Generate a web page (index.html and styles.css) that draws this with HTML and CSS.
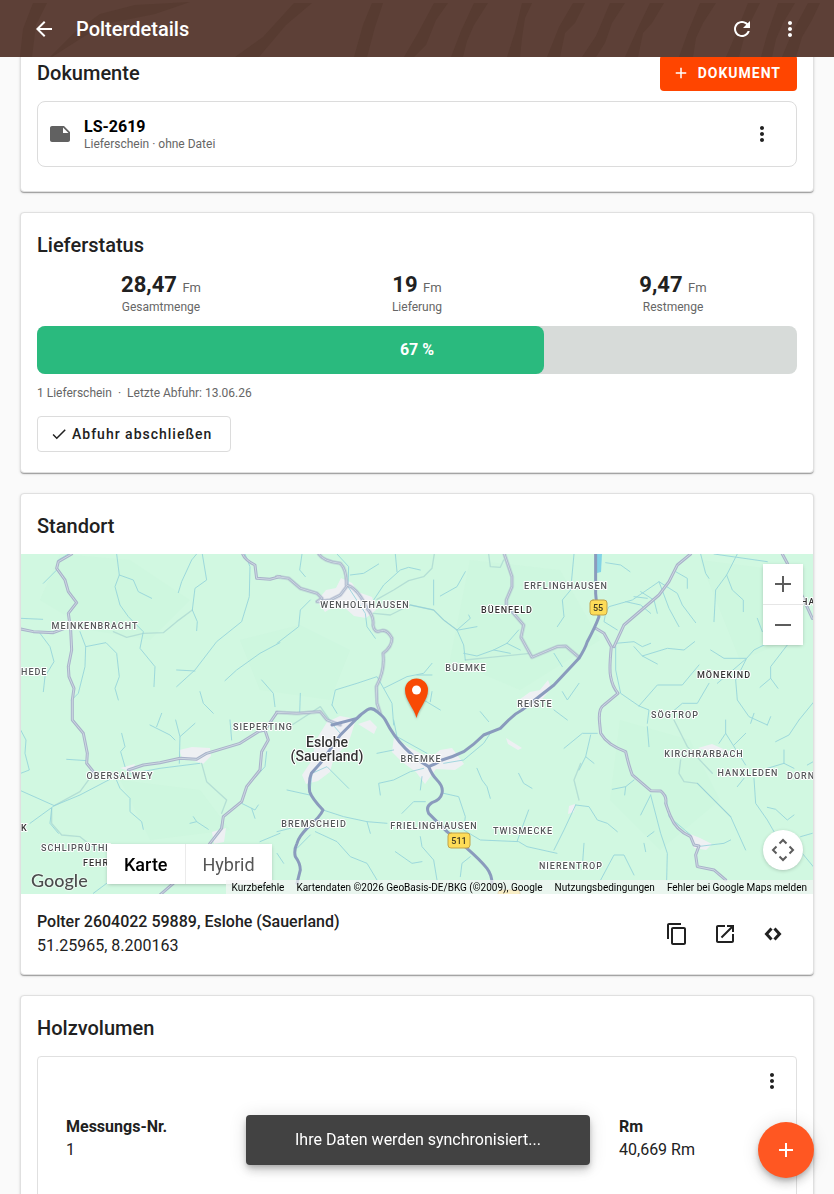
FILE: index.html
```html
<!DOCTYPE html>
<html lang="de">
<head>
    <meta charset="UTF-8">
    <meta name="viewport" content="width=device-width, initial-scale=1">
    <title>Polterdetails</title>
    <link rel="stylesheet" href="styles.css">
</head>
<body>
    <header class="topbar">
        <svg class="topbar-pattern" viewBox="0 0 834 57" preserveAspectRatio="xMidYMid slice" aria-hidden="true">
            <path d="M33 3h14L36 25 32 57H20l3-28zM75 32l25-18 35-9 55-3-35 12-50 10-25 15-28 18H50zM294 3h18l-26 22-27 32h-24l28-20zM372 3h11l-8 24-8 30h-13l9-32zM434 3h14l-12 17-10 25-12 12h-10l14-24zM474 3h14l-14 22-7 16-4 16h-12l10-26zM522 3h10l-7 15-3 20-2 19h-13l8-25zM573 3h12l-10 20-10 10-5 24h-13l12-30zM610 3h15l-13 20-7 20-9 14h-14l14-21zM650 3h14l-12 20-9 10-5 24h-13l13-29zM700 3h16l-13 20-7 15-3 19h-14l9-25zM748 3h12l-9 18-7 17-5 19h-13l9-21zM778 3h17l-12 20-7 16-4 18h-11l6-22zM808 3h12l-8 17-10 17-6 20h-14l10-24z"/>
        </svg>
        <button class="icon-button" aria-label="Zurück">
            <svg viewBox="0 0 24 24"><path d="M20 11H7.83l5.59-5.59L12 4l-8 8 8 8 1.41-1.41L7.83 13H20v-2z"/></svg>
        </button>
        <h1>Polterdetails</h1>
        <button class="icon-button" aria-label="Aktualisieren">
            <svg viewBox="0 0 24 24"><path d="M17.65 6.35C16.2 4.9 14.21 4 12 4c-4.42 0-7.99 3.58-7.99 8s3.57 8 7.99 8c3.73 0 6.84-2.55 7.73-6h-2.08c-.82 2.33-3.04 4-5.65 4-3.31 0-6-2.69-6-6s2.69-6 6-6c1.66 0 3.14.69 4.22 1.78L13 11h7V4l-2.35 2.35z"/></svg>
        </button>
        <button class="icon-button" aria-label="Menü">
            <svg viewBox="0 0 24 24"><path d="M12 8c1.1 0 2-.9 2-2s-.9-2-2-2-2 .9-2 2 .9 2 2 2zm0 2c-1.1 0-2 .9-2 2s.9 2 2 2 2-.9 2-2-.9-2-2-2zm0 6c-1.1 0-2 .9-2 2s.9 2 2 2 2-.9 2-2-.9-2-2-2z"/></svg>
        </button>
    </header>

    <main class="content">
        <section class="card documents">
            <div class="card-header">
                <h2>Dokumente</h2>
                <button class="button button-primary">
                    <svg viewBox="0 0 24 24"><path d="M19 13h-6v6h-2v-6H5v-2h6V5h2v6h6v2z"/></svg>
                    DOKUMENT
                </button>
            </div>
            <div class="document">
                <svg class="document-icon" viewBox="0 0 24 24"><path d="M22 10l-6-6H4c-1.1 0-2 .9-2 2v12.01c0 1.1.9 1.99 2 1.99l16-.01c1.1 0 2-.89 2-1.99v-8zm-7-4.5l5.5 5.5H15V5.5z"/></svg>
                <div class="document-text">
                    <strong>LS-2619</strong>
                    <span>Lieferschein · ohne Datei</span>
                </div>
                <button class="icon-button" aria-label="Dokument-Menü">
                    <svg viewBox="0 0 24 24"><path d="M12 8c1.1 0 2-.9 2-2s-.9-2-2-2-2 .9-2 2 .9 2 2 2zm0 2c-1.1 0-2 .9-2 2s.9 2 2 2 2-.9 2-2-.9-2-2-2zm0 6c-1.1 0-2 .9-2 2s.9 2 2 2 2-.9 2-2-.9-2-2-2z"/></svg>
                </button>
            </div>
        </section>

        <section class="card status">
            <h2>Lieferstatus</h2>
            <div class="stats">
                <div class="stat">
                    <div class="stat-value">28,47 <span class="unit">Fm</span></div>
                    <div class="stat-label">Gesamtmenge</div>
                </div>
                <div class="stat">
                    <div class="stat-value">19 <span class="unit">Fm</span></div>
                    <div class="stat-label">Lieferung</div>
                </div>
                <div class="stat">
                    <div class="stat-value">9,47 <span class="unit">Fm</span></div>
                    <div class="stat-label">Restmenge</div>
                </div>
            </div>
            <div class="progress">
                <div class="progress-fill" style="width: 66.7%"></div>
                <span class="progress-label">67 %</span>
            </div>
            <p class="status-meta"><span>1 Lieferschein</span><span class="dot">·</span><span>Letzte Abfuhr: 13.06.26</span></p>
            <button class="button button-outlined">
                <svg viewBox="0 0 24 24"><path d="M9 16.17L4.83 12l-1.42 1.41L9 19 21 7l-1.41-1.41z"/></svg>
                Abfuhr abschließen
            </button>
        </section>

        <section class="card location">
            <h2>Standort</h2>
            <div class="map">
                <svg class="map-canvas" viewBox="21 554 792 340" preserveAspectRatio="xMidYMid slice" role="img" aria-label="Karte von Eslohe">
                    <defs>
                        <g id="roads-small">
                            <g transform="translate(0 480) scale(.3333)">
                                <path d="M215 222L175 245 170 265 195 300 205 335 230 368 205 400 212 450 215 510 205 560 207 590 222 625 217 660 217 720 250 760 262 820 260 850 280 875"/>
                                <path d="M62 447L100 455 160 458 208 440M728 222Q735 240 765 255L770 295 810 298 840 290"/>
                            </g>
                            <g transform="translate(0 720) scale(.3333)">
                                <path d="M385 150L430 135 480 128 540 115 590 118 620 100 720 70 775 35 795 30 805 60 785 95 780 150 740 200 725 245 670 290 665 325 630 370 610 400 520 490 480 525M795 30L831 -23"/>
                            </g>
                            <g transform="translate(277 550) scale(.3333)">
                                <path d="M0 80L35 85 70 115 120 130 135 145 120 155 160 150 190 135 210 108M125 12Q140 35 190 40 210 60 208 105 240 110 270 175 292 200 288 225 292 250 310 243 330 235 345 265 345 290 318 310 325 360 298 410L300 460 310 490M0 487L60 490 130 485 150 510 190 525M682 12L705 80 705 110 688 150 688 165 740 225 732 262 765 322 840 290 866 288 906 322"/>
                            </g>
                            <g transform="translate(554 550) scale(.3333)">
                                <path d="M410 12L370 45 345 95 315 135 210 225 180 290M125 235L150 250 172 290Q165 360 170 380 175 410 192 430L150 465Q132 475 137 520L140 550Q160 585 215 605 225 650 235 675L290 722 320 723Q340 740 335 760 345 790 350 800 365 840 410 860L420 885 435 888 425 915 430 950 480 960 515 990M685 12L700 40 775 205"/>
                            </g>
                        </g>
                    </defs>
                    <rect class="map-land" x="21" y="554" width="792" height="340"/>
                    <g class="map-relief">
                        <path d="M60 554L130 560 190 600 150 640 90 630 40 600zM240 640L300 625 350 650 330 700 260 690zM470 560L560 570 600 640 520 690 450 660zM620 720L690 740 720 800 660 850 610 800zM120 780L200 790 230 830 150 840zM700 560L780 570 790 640 740 660z"/>
                    </g>
                    <g class="map-town">
                        <path d="M317 601L326 590 336 588 341 578 352 583 358 592 372 597 376 610 366 618 354 616 345 608 333 607 325 612z"/>
                        <path d="M327 722L340 716 356 719 352 732 348 744 334 757 330 772 318 781 306 784 302 775 312 760 316 740z"/>
                        <path d="M358 724L370 720 377 727 374 734zM394 737L408 747 430 758 440 750 452 748 464 764 455 770 436 769 425 784 416 772 402 762 392 752z"/>
                        <path d="M516 702L530 692 540 690 548 680 551 688 540 702 522 710zM179 750L192 747 210 748 211 756 203 764 192 760 183 760zM506 738L522 748 518 750 508 744z"/>
                        <path d="M690 834L700 838 712 844 706 850 694 848zM212 832L226 828 224 842 214 844zM120 768L135 764 132 772zM569 806L575 804 574 812 568 814zM698 748L712 744 730 752 708 752z"/>
                    </g>
                    <g class="map-tracks">
                        <path transform="translate(0 480) scale(.3333)" d="M340 455L380 472 430 460 490 458 530 425 577 390"/>
                        <path transform="translate(277 550) scale(.3333)" d="M472 12L465 55 440 80 395 92 350 120 300 148M290 190L340 195 400 165 470 180 500 210 540 240M565 330L640 322 760 310M635 12L640 50 670 52 680 30M45 525L130 470 165 520"/>
                        <path transform="translate(0 720) scale(.3333)" d="M163 257L240 215 280 160M605 130L620 185 680 240 665 280M155 265L155 310 185 345 240 350 290 390"/>
                        <path transform="translate(554 720) scale(.3333)" d="M360 0L400 80 475 160M380 120L375 160 390 185 430 190 530 290M80 130L60 180 75 240"/>
                    </g>
                    <g class="map-rivers">
                        <path transform="translate(0 480) scale(.3333)" d="M350 222L358 285 345 320 360 375 385 410 430 455 420 505 465 560 462 620M358 285L400 300 415 335 455 355M590 222L575 240 545 305 535 338M607 222L620 300 585 325 577 390 592 425 590 452M735 222L750 260 748 350 725 425 650 485 585 570 530 620M530 570L585 573M840 488L780 520 710 570 675 602M62 415L128 418M120 460L150 500 162 545 135 590 130 635M240 455L257 500 255 560 235 640 215 660M257 500L318 488 350 520 358 590 345 625 355 660M130 310L170 270 175 240 205 222M190 290L205 335M600 635L610 670 640 700M785 600L820 640 825 680"/>
                        <path transform="translate(0 720) scale(.3333)" d="M62 30L78 60 75 100 88 150 62 160M62 212L163 257 90 310M163 257L240 225 345 170 480 145 600 130M345 170L360 205 390 235 390 275 425 305 430 328M450 15L510 45 525 60M470 20L485 -20M527 0L540 50 538 130M540 50L585 10M365 40L375 80 362 95 375 140M200 118L262 122M725 250L765 270 775 255M765 295L755 265M580 290L590 305 625 328M590 305L570 310M670 290L660 330M280 520L320 490M155 265L150 310 175 340M690 0L695 60M800 95L795 140 750 190M840 340L780 365"/>
                        <path transform="translate(277 550) scale(.3333)" d="M180 12L215 50 213 110 265 190 270 230 295 265M220 75L260 70 305 42M75 12L68 60 85 80M355 12L360 65M290 150L320 105 370 60 395 52 430 60M400 165L470 180 500 210 540 240 560 285 565 330M470 165L470 90M490 138L540 110 565 65M540 240L580 205 575 195M545 240L600 230M560 310L600 318 650 300 690 280 725 240M650 300L700 310M690 280L730 300M100 150L70 180 65 230 0 280M320 415L390 380 440 370 465 340M420 375L465 375M165 465L175 420 240 400 300 380 320 415 345 460 350 525M165 465L180 490M440 450L490 480M460 455L465 425M610 485L635 515M70 430L68 490"/>
                        <path transform="translate(554 550) scale(.3333)" d="M155 190L165 170 235 150 315 95 370 130 385 165 425 218M315 95L345 175 375 230M260 125L300 150 310 190M215 155L260 165 290 190M240 140L280 145M550 12L518 75 485 120 480 215M518 75L535 120 568 150 568 185M440 12L455 70 465 85M155 38L200 45 228 65M365 65L400 85 400 115M480 12L640 35M185 280L240 275 265 290 290 280M240 290L265 318 340 295 390 300 422 275M265 318L310 342M470 300L510 325 578 325 600 300 640 280M490 400L578 325 545 390 550 450 585 500 640 525M700 285L650 350 650 385 618 412M650 385L672 415M255 468L310 405 385 405 435 345M185 290L185 360 200 430 255 468 285 480 280 520M350 490L385 460 430 460 465 400M780 455L735 510M610 205L625 245M60 12L50 120 25 150 30 200 10 230M0 310L25 350M25 425L40 450 75 400M155 190L150 215 190 240M0 480L40 510"/>
                        <path transform="translate(277 720) scale(.3333)" d="M155 0L190 40M350 0L360 50 450 100M500 130L560 120 620 70 640 40M310 225L305 190 350 180 400 155 440 145M300 100L350 90M30 210L98 225 105 160 150 140 215 205M138 270L200 290 270 305 330 310M270 305L280 340M115 335L180 365 220 410 270 430 300 480M100 345L60 385M375 280L410 245 445 245M500 220L545 230 565 290 560 330 610 360 725 365 750 380 840 400M720 365L755 270M600 145L615 180 630 200 640 235M725 160L740 190 765 205M430 350L435 380 470 420 480 480M355 395L405 430 435 425M0 335L40 325M550 470L555 430 580 410M435 170L430 210M0 400L20 430"/>
                        <path transform="translate(554 720) scale(.3333)" d="M30 85L85 40 130 40M110 45L95 110 75 150M95 110L120 130M280 20L285 80M240 180L215 200 175 208M215 200L212 225M290 225L320 340 340 400 338 480M290 225L260 285M300 335L280 350M65 255L105 260 130 300 160 310 190 335M65 255L30 330 0 390M430 190L530 290 575 390M600 175L605 250 640 300 660 335M640 262L665 268 700 300 720 285M515 0L515 40 495 70M515 40L575 135M575 40L540 75M665 65L705 45 735 0M430 380L510 370 530 360M140 480L180 405 210 405 240 465M90 370L85 440M690 90L690 130 640 145M690 130L720 145M570 175L550 200M335 225L345 290 410 345M760 135L778 125M270 370L275 395M745 400L778 440M740 350L775 340M590 10L600 -20M640 15L650 -10"/>
                    </g>
                    <path class="map-water" d="M597 554h5l-1 18-4 1z"/>
                    <use class="road-casing" href="#roads-small"/>
                    <use class="road-core" href="#roads-small"/>
                    <g class="road-main">
                        <path transform="translate(277 720) scale(.3333)" d="M165 15L240 -5Q255 -20 270 -30 285 -40 300 -25 320 -10 325 0 350 50 385 85 420 120 455 140 480 130 495 120 530 110 560 95 590 75 620 45L670 25 695 0Q715 -20 735 -30L831 -105 906 -185Q925 -215 931 -235 955 -280 966 -310 958 -350 956 -380L956 -500"/>
                        <path transform="translate(277 720) scale(.3333)" d="M250 -15L190 45 130 130 103 160Q94 180 98 215 105 235 138 270 130 290 90 325 65 350 60 370 50 390 55 410 70 430 70 450L60 490M455 140Q465 165 480 180 500 200 495 220 490 240 465 248 445 260 455 280L510 335 570 385Q610 420 630 445 645 465 645 490"/>
                    </g>
                    <g class="map-shields">
                        <rect x="590" y="600" width="17" height="15" rx="3"/>
                        <text x="598" y="611">55</text>
                        <rect x="448" y="833" width="22" height="15" rx="3"/>
                        <text x="459" y="844">511</text>
                        <rect x="498" y="890" width="22" height="15" rx="3"/>
                    </g>
                    <g class="map-labels">
                        <text x="95" y="629">MEINKENBRACHT</text>
                        <text x="21" y="675" class="edge">HEDE</text>
                        <text x="365" y="608">WENHOLTHAUSEN</text>
                        <text x="566" y="589">ERFLINGHAUSEN</text>
                        <text x="507" y="613" class="dark">BÜENFELD</text>
                        <text x="466" y="671">BÜEMKE</text>
                        <text x="535" y="707">REISTE</text>
                        <text x="724" y="678" class="dark">MÖNEKIND</text>
                        <text x="675" y="718">SÖGTROP</text>
                        <text x="704" y="757">KIRCHRARBACH</text>
                        <text x="748" y="776">HANXLEDEN</text>
                        <text x="787" y="779" class="edge">DORN</text>
                        <text x="801" y="605" class="dark edge">HA</text>
                        <text x="263" y="730">SIEPERTING</text>
                        <text x="120" y="779">OBERSALWEY</text>
                        <text x="421" y="762">BREMKE</text>
                        <text x="314" y="827">BREMSCHEID</text>
                        <text x="434" y="829">FRIELINGHAUSEN</text>
                        <text x="523" y="834">TWISMECKE</text>
                        <text x="571" y="869">NIERENTROP</text>
                        <text x="41" y="851" class="edge">SCHLIPRÜTHE</text>
                        <text x="83" y="866" class="dark edge">FEHR</text>
                        <text x="21" y="831" class="dark edge">K</text>
                        <text x="327" y="747" class="city">Eslohe</text>
                        <text x="327" y="761" class="city">(Sauerland)</text>
                    </g>
                    <path class="map-pin" d="M416.500 718C414 708 405 700 405 690a11.500 11.500 0 0 1 23 0c0 10-9 18-11.500 28z"/>
                    <circle cx="416.500" cy="690" r="4.500" fill="#fff"/>
                </svg>
                <div class="map-zoom">
                    <button aria-label="Vergrößern"><svg viewBox="0 0 18 18"><path d="M1 9h16M9 1v16"/></svg></button>
                    <button aria-label="Verkleinern"><svg viewBox="0 0 18 18"><path d="M1 9h16"/></svg></button>
                </div>
                <button class="map-camera" aria-label="Kamerasteuerung">
                    <svg viewBox="0 0 24 24"><path d="M8.500 5.500L12 2l3.500 3.500M8.500 18.500L12 22l3.500-3.500M5.500 8.500L2 12l3.500 3.500M18.500 8.500L22 12l-3.500 3.500"/></svg>
                </button>
                <div class="map-types">
                    <button class="active">Karte</button>
                    <button>Hybrid</button>
                </div>
                <a class="map-logo" href="#">Google</a>
                <div class="map-footer">
                    <button>Kurzbefehle</button>
                    <span>Kartendaten ©2026 GeoBasis-DE/BKG (©2009), Google</span>
                    <a href="#">Nutzungsbedingungen</a>
                    <a href="#">Fehler bei Google Maps melden</a>
                </div>
            </div>
            <div class="location-footer">
                <div class="location-text">
                    <strong>Polter 2604022 59889, Eslohe (Sauerland)</strong>
                    <span>51.25965, 8.200163</span>
                </div>
                <button class="icon-button" aria-label="Kopieren">
                    <svg viewBox="0 0 24 24"><path d="M16 1H4c-1.1 0-2 .9-2 2v14h2V3h12V1zm3 4H8c-1.1 0-2 .9-2 2v14c0 1.100.9 2 2 2h11c1.100 0 2-.9 2-2V7c0-1.100-.9-2-2-2zm0 16H8V7h11v14z"/></svg>
                </button>
                <button class="icon-button" aria-label="Extern öffnen">
                    <svg viewBox="0 0 24 24"><path d="M19 19H5V5h7V3H5c-1.110 0-2 .9-2 2v14c0 1.100.89 2 2 2h14c1.100 0 2-.9 2-2v-7h-2v7zM14 3v2h3.590l-9.830 9.830 1.410 1.410L19 6.410V10h2V3h-7z"/></svg>
                </button>
                <button class="icon-button" aria-label="Koordinaten">
                    <svg class="code-icon" viewBox="0 0 24 24"><path d="M10.500 6.500L5.500 12l5 5.500M13.500 6.500l5 5.500-5 5.500"/></svg>
                </button>
            </div>
        </section>

        <section class="card volume">
            <h2>Holzvolumen</h2>
            <div class="measurement">
                <div class="measurement-header">
                    <button class="icon-button" aria-label="Messungs-Menü">
                        <svg viewBox="0 0 24 24"><path d="M12 8c1.1 0 2-.9 2-2s-.9-2-2-2-2 .9-2 2 .9 2 2 2zm0 2c-1.1 0-2 .9-2 2s.9 2 2 2 2-.9 2-2-.9-2-2-2zm0 6c-1.1 0-2 .9-2 2s.9 2 2 2 2-.9 2-2-.9-2-2-2z"/></svg>
                    </button>
                </div>
                <dl class="measurement-data">
                    <div>
                        <dt>Messungs-Nr.</dt>
                        <dd>1</dd>
                    </div>
                    <div>
                        <dt>Rm</dt>
                        <dd>40,669 Rm</dd>
                    </div>
                </dl>
            </div>
        </section>
    </main>

    <div class="snackbar" role="status">Ihre Daten werden synchronisiert...</div>
    <button class="fab" aria-label="Hinzufügen">
        <svg viewBox="0 0 24 24"><path d="M19 13h-6v6h-2v-6H5v-2h6V5h2v6h6v2z"/></svg>
    </button>
</body>
</html>
```
FILE: styles.css
```css
* {
    box-sizing: border-box;
}

body {
    margin: 0;
    font-family: Roboto, "Liberation Sans", sans-serif;
    font-size: 16px;
    color: #212121;
    background-color: #fafafa;
}

button {
    margin: 0;
    padding: 0;
    border: none;
    background: none;
    color: inherit;
    font-family: inherit;
    cursor: pointer;
}

h1, h2 {
    margin: 0;
    font-size: 20px;
    font-weight: 500;
    line-height: 32px;
}

/* Top bar */
.topbar {
    position: fixed;
    top: 0;
    left: 0;
    right: 0;
    z-index: 10;
    display: flex;
    align-items: center;
    height: 57px;
    padding: 0 20px;
    background-color: #5d4037;
    color: #ffffff;
}

.topbar-pattern {
    position: absolute;
    top: 0;
    left: 0;
    width: 100%;
    height: 100%;
    fill: #573b31;
}

.topbar h1 {
    position: relative;
    flex: 1;
    margin-left: 8px;
}

.icon-button {
    position: relative;
    display: flex;
    align-items: center;
    justify-content: center;
    flex-shrink: 0;
    width: 48px;
    height: 48px;
    border-radius: 50%;
}

.icon-button svg {
    width: 24px;
    height: 24px;
    fill: currentColor;
}

/* Cards */
.content {
    height: 100vh;
    padding: 38px 20px 0;
    overflow-y: auto;
    scrollbar-width: none;
}

.card {
    margin-bottom: 20px;
    padding: 16px 16px 20px;
    border: 1px solid #e0e0e0;
    border-radius: 4px;
    background-color: #ffffff;
    box-shadow: 0 2px 1px -1px rgba(0, 0, 0, 0.2), 0 1px 1px rgba(0, 0, 0, 0.14), 0 1px 3px rgba(0, 0, 0, 0.12);
}

.card-header {
    display: flex;
    align-items: center;
    justify-content: space-between;
}

.button {
    display: inline-flex;
    align-items: center;
    height: 36px;
    border-radius: 4px;
    font-size: 14px;
    font-weight: 500;
    letter-spacing: 1px;
}

.button svg {
    width: 18px;
    height: 18px;
    fill: currentColor;
}

.button-primary {
    gap: 8px;
    padding: 0 16px 0 12px;
    background-color: #ff4500;
    color: #ffffff;
    font-weight: 700;
}

.button-outlined {
    gap: 4px;
    padding: 0 18px 0 12px;
    border: 1px solid #dcdcdc;
}

/* Documents */
.documents {
    padding-bottom: 24px;
}

.document {
    display: flex;
    align-items: center;
    gap: 12px;
    height: 66px;
    margin-top: 10px;
    padding: 0 10px;
    border: 1px solid #dcdcdc;
    border-radius: 8px;
}

.document-icon {
    width: 24px;
    height: 24px;
    fill: #616161;
}

.document-text {
    display: flex;
    flex: 1;
    flex-direction: column;
}

.document-text strong {
    color: #000000;
    line-height: 20px;
}

.document-text span {
    color: #666666;
    font-size: 12px;
    line-height: 14px;
}

/* Delivery status */
.stats {
    display: grid;
    grid-template-columns: repeat(3, 1fr);
    gap: 8px;
    margin: 10px 0 11px;
    color: #666666;
    text-align: center;
}

.stat-value {
    color: #212121;
    font-size: 22px;
    font-weight: 700;
    line-height: 28px;
}

.unit {
    color: #666666;
    font-size: 13px;
    font-weight: 400;
    line-height: 14px;
}

.stat-label {
    font-size: 12px;
    line-height: 16px;
}

.progress {
    position: relative;
    height: 48px;
    border-radius: 8px;
    background-color: #d7dbd9;
}

.progress-fill {
    height: 100%;
    border-radius: 8px;
    background-color: #2aba7e;
}

.progress-label {
    position: absolute;
    inset: 0;
    color: #ffffff;
    font-weight: 700;
    line-height: 48px;
    text-align: center;
}

.status-meta {
    display: flex;
    gap: 6px;
    margin: 11px 0 15px;
    color: #666666;
    font-size: 12px;
    line-height: 16px;
}

/* Location */
.location {
    padding: 16px 0 0;
}

.location h2 {
    margin: 0 16px 12px;
}

.map {
    position: relative;
    height: 340px;
    overflow: hidden;
}

.map-canvas {
    display: block;
    width: 100%;
    height: 100%;
    fill: none;
    stroke-linejoin: round;
    stroke-linecap: round;
}

.map-land {
    fill: #d1f8e1;
}

.map-relief {
    fill: #cbf4dc;
    opacity: 0.4;
}

.map-town {
    fill: #eef0f3;
}

.map-tracks {
    stroke: #b4dfd5;
    stroke-width: 4;
}

.map-rivers {
    stroke: #8fd0da;
    stroke-width: 3;
    opacity: 0.8;
}

.map-water {
    fill: #83d3e6;
}

.road-casing {
    stroke: #a9b3ca;
    stroke-width: 9;
}

.road-core {
    stroke: #cdd8e2;
    stroke-width: 3;
}

.road-main {
    stroke: #8a9bbd;
    stroke-width: 9;
}

.map-shields rect {
    fill: #fddc57;
    stroke: #c0a24b;
}

.map-shields text {
    fill: #3f3a22;
    font-size: 9px;
    font-weight: 500;
    text-anchor: middle;
}

.map-labels {
    fill: #55585a;
    stroke: #ffffff;
    stroke-width: 2px;
    paint-order: stroke;
    font-size: 9px;
    font-weight: 500;
    letter-spacing: 1px;
    text-anchor: middle;
}

.map-labels .dark {
    fill: #333333;
}

.map-labels .edge {
    text-anchor: start;
}

.map-labels .city {
    fill: #333333;
    font-size: 14px;
    letter-spacing: 0;
}

.map-pin {
    fill: #f84a05;
    filter: drop-shadow(0 1px 1px rgba(0, 0, 0, 0.3));
}

.map-zoom {
    position: absolute;
    top: 10px;
    right: 10px;
    background-color: #ffffff;
    box-shadow: 0 1px 4px -1px rgba(0, 0, 0, 0.3);
}

.map-zoom button {
    display: flex;
    align-items: center;
    justify-content: center;
    width: 40px;
    height: 40px;
}

.map-zoom button + button {
    height: 41px;
    border-top: 1px solid #e6e6e6;
}

.map-zoom svg {
    width: 18px;
    height: 18px;
    stroke: #5c5c5c;
    stroke-width: 2;
}

.map-camera {
    position: absolute;
    right: 10px;
    bottom: 24px;
    display: flex;
    align-items: center;
    justify-content: center;
    width: 40px;
    height: 40px;
    border-radius: 50%;
    background-color: #ffffff;
    box-shadow: 0 1px 4px -1px rgba(0, 0, 0, 0.3);
}

.map-camera svg {
    width: 24px;
    height: 24px;
    fill: none;
    stroke: #5c5c5c;
    stroke-width: 2;
}

.map-types {
    position: absolute;
    bottom: 10px;
    left: 86px;
    z-index: 1;
    display: flex;
    background-color: #ffffff;
    box-shadow: 0 1px 4px -1px rgba(0, 0, 0, 0.3);
}

.map-types button {
    height: 40px;
    padding: 0 17px;
    color: #565656;
    font-size: 18px;
}

.map-types .active {
    border-right: 1px solid #ebebeb;
    color: #000000;
    font-weight: 500;
}

.map-logo {
    position: absolute;
    bottom: 3px;
    left: 10px;
    color: #4a4d4c;
    font-family: Lato, sans-serif;
    font-size: 18px;
    font-weight: 500;
    line-height: 22px;
    text-decoration: none;
    text-shadow: 0 0 2px #ffffff, 0 0 2px #ffffff;
}

.map-footer {
    position: absolute;
    right: 0;
    bottom: 0;
    z-index: 2;
    display: flex;
    background-color: rgba(245, 245, 245, 0.7);
    color: #000000;
    font-size: 10px;
    line-height: 12px;
    white-space: nowrap;
}

.map-footer > * {
    padding: 2px 6px 0;
    color: inherit;
    font-size: inherit;
    line-height: inherit;
    text-decoration: none;
}

.location-footer {
    display: flex;
    align-items: center;
    padding: 16px;
}

.location-text {
    display: flex;
    flex: 1;
    flex-direction: column;
    line-height: 24px;
}

.location-text strong {
    font-weight: 500;
}

.location-footer .code-icon {
    fill: none;
    stroke: currentColor;
    stroke-width: 3;
}

/* Wood volume */
.measurement {
    min-height: 260px;
    margin-top: 12px;
    border: 1px solid #e0e0e0;
    border-radius: 4px;
}

.measurement-header {
    display: flex;
    justify-content: flex-end;
}

.measurement-data {
    display: grid;
    grid-template-columns: 1fr 149px;
    margin: 0;
    padding: 10px 28px;
    line-height: 23px;
}

.measurement-data dt {
    font-weight: 700;
}

.measurement-data dd {
    margin: 0;
}

/* Overlays */
.snackbar {
    position: fixed;
    bottom: 29px;
    left: 50%;
    z-index: 5;
    width: 344px;
    margin-left: -171px;
    border-radius: 4px;
    background-color: #424242;
    color: #ffffff;
    line-height: 50px;
    text-align: center;
    box-shadow: 0 3px 5px -1px rgba(0, 0, 0, 0.2), 0 6px 10px rgba(0, 0, 0, 0.14), 0 1px 18px rgba(0, 0, 0, 0.12);
}

.fab {
    position: fixed;
    right: 20px;
    bottom: 16px;
    z-index: 5;
    display: flex;
    align-items: center;
    justify-content: center;
    width: 56px;
    height: 56px;
    border-radius: 50%;
    background-color: #ff5722;
    color: #ffffff;
    box-shadow: 0 3px 5px -1px rgba(0, 0, 0, 0.2), 0 6px 10px rgba(0, 0, 0, 0.14), 0 1px 18px rgba(0, 0, 0, 0.12);
}

.fab svg {
    width: 24px;
    height: 24px;
    fill: currentColor;
}
```
